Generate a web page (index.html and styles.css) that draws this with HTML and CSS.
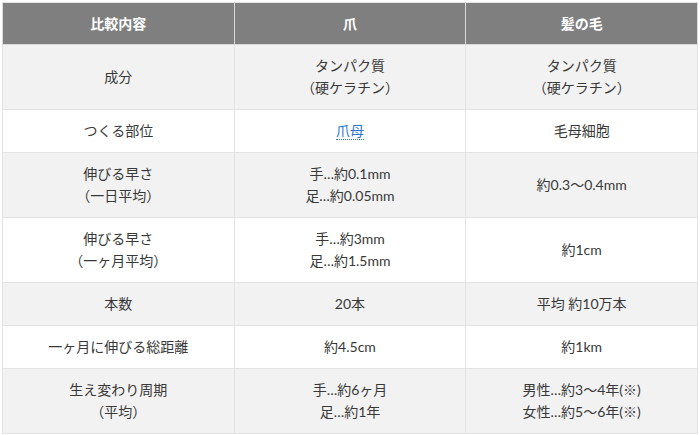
FILE: index.html
```html
<!DOCTYPE html>
<html lang="ja">
<head>
<meta charset="utf-8">
<link rel="stylesheet" href="styles.css">
</head>
<body>
<table class="cmp">
  <thead>
    <tr><th>比較内容</th><th>爪</th><th>髪の毛</th></tr>
  </thead>
  <tbody>
    <tr><td>成分</td><td>タンパク質<br><span class="paren">（硬ケラチン）</span></td><td>タンパク質<br><span class="paren">（硬ケラチン）</span></td></tr>
    <tr><td>つくる部位</td><td><span class="link">爪母</span></td><td>毛母細胞</td></tr>
    <tr><td>伸びる早さ<br><span class="paren">（一日平均）</span></td><td>手…約0.1mm<br>足…約0.05mm</td><td>約0.3〜0.4mm</td></tr>
    <tr><td>伸びる早さ<br><span class="paren">（一ヶ月平均）</span></td><td>手…約3mm<br>足…約1.5mm</td><td>約1cm</td></tr>
    <tr><td>本数</td><td>20本</td><td>平均 約10万本</td></tr>
    <tr><td>一ヶ月に伸びる総距離</td><td>約4.5cm</td><td>約1km</td></tr>
    <tr><td>生え変わり周期<br><span class="paren">（平均）</span></td><td>手…約6ヶ月<br>足…約1年</td><td>男性…約3〜4年(※)<br>女性…約5〜6年(※)</td></tr>
  </tbody>
</table>
</body>
</html>
```
FILE: styles.css
```css
html, body {
  margin: 0;
  padding: 0;
  background: #ffffff;
}
body {
  padding: 2px;
  font-family: Lato, "Noto Sans CJK JP", sans-serif;
  font-size: 14px;
  color: #383838;
}
.cmp {
  width: 696px;
  border-collapse: collapse;
  table-layout: fixed;
  border: 1px solid #e3e3e3;
}
.cmp th {
  background: #7f7f7f;
  color: #ffffff;
  font-weight: bold;
  height: 41px;
  padding: 0 10px;
  line-height: 20px;
  border: 1px solid #d9d9d9;
  border-top-color: #e3e3e3;
  text-align: center;
}
.cmp td {
  padding: 10px 10px;
  line-height: 22px;
  text-align: center;
  border: 1px solid #e3e3e3;
}
.cmp tbody tr:nth-child(odd) td {
  background: #f2f2f2;
}
.cmp tbody tr:nth-child(even) td {
  background: #ffffff;
}
.paren {
  font-feature-settings: "halt";
}
.link {
  color: #2a76d2;
  border-bottom: 1px dotted #2a76d2;
}
```
